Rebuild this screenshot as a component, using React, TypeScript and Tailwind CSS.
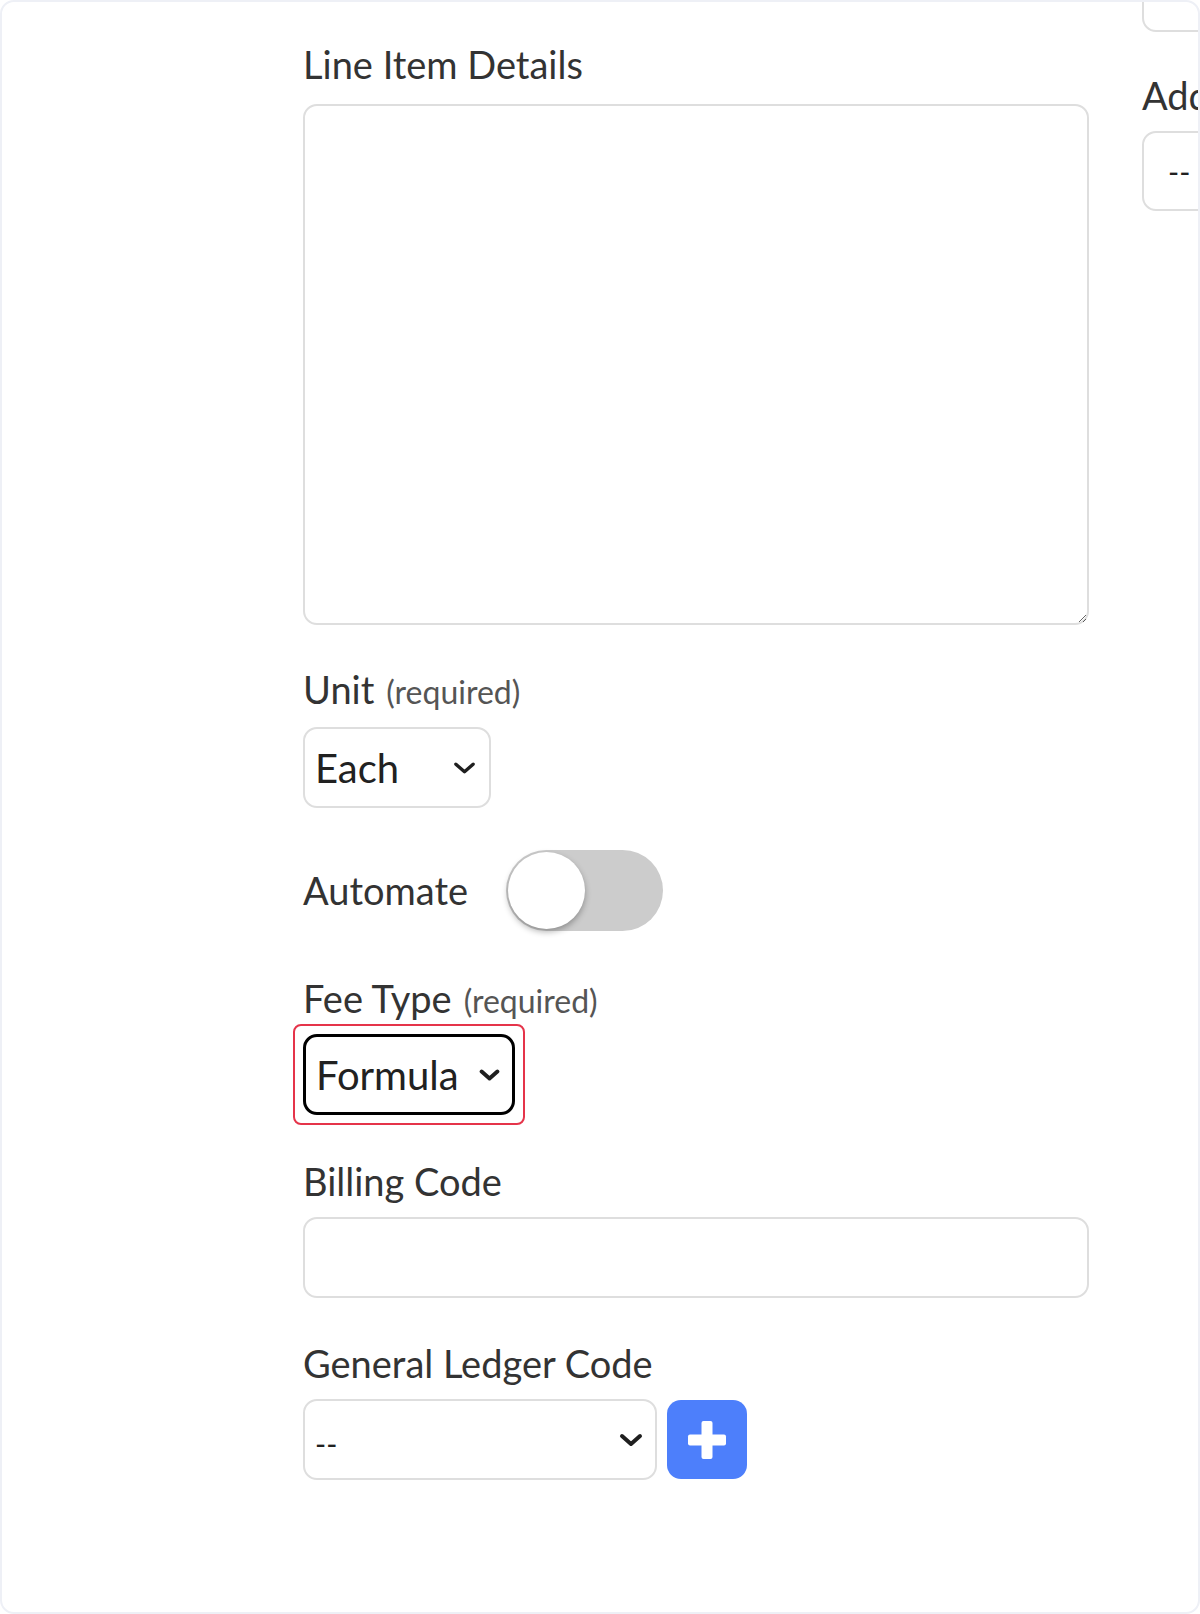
import { ReactNode } from "react";

function Chevron({ className, stroke = 3.5 }: { className?: string; stroke?: number }) {
  return (
    <svg viewBox="0 0 24 14" className={className} fill="none" stroke="#1f1f1f" strokeWidth={stroke} strokeLinecap="round" strokeLinejoin="round">
      <polyline points="3,3 12,11 21,3" />
    </svg>
  );
}

function Label({ children, className = "" }: { children: ReactNode; className?: string }) {
  return <div className={"text-[38px] leading-[43px] text-[#333] whitespace-nowrap " + className}>{children}</div>;
}

function Required() {
  return <span className="ml-[12px] text-[32px] text-[#555]">(required)</span>;
}

export default function App() {
  return (
    <div className="bg-white font-['Lato','Open_Sans',sans-serif]">
      <div className="w-full h-[1614px] border-2 border-[#eef0f6] rounded-[14px] overflow-hidden pl-[301px] pt-[41px] flex gap-[53px]">
        {/* main column */}
        <div className="w-[786px] shrink-0 flex flex-col items-start">
          <Label>Line Item Details</Label>
          <textarea className="mt-[18px] w-[786px] h-[521px] border-2 border-[#dedede] rounded-[14px] outline-none resize" />

          <Label className="mt-[43px]">
            Unit<Required />
          </Label>
          <div className="mt-[14px] w-[188px] h-[81px] border-2 border-[#dedede] rounded-[14px] flex items-center justify-between pl-[10px] pr-[13px]">
            <span className="text-[40px] text-[#212121]">Each</span>
            <Chevron className="w-[23px] h-[14px]" />
          </div>

          <div className="mt-[42px] flex items-center gap-[38px]">
            <Label>Automate</Label>
            <div className="w-[157px] h-[81px] rounded-full bg-[#cccccc] p-[2px] flex items-center">
              <div className="w-[77px] h-[77px] rounded-full bg-white shadow-[0_3px_6px_rgba(0,0,0,0.3)]" />
            </div>
          </div>

          <Label className="mt-[46px]">
            Fee Type<Required />
          </Label>
          <div className="mt-[2px] -ml-[10px] border-2 border-[#e5344a] rounded-[8px] p-[8px]">
            <div className="w-[212px] h-[81px] border-[3px] border-black rounded-[14px] flex items-center justify-between pl-[10px] pr-[12px]">
              <span className="text-[40px] text-[#212121]">Formula</span>
              <Chevron className="w-[21px] h-[14px]" stroke={4.5} />
            </div>
          </div>

          <Label className="mt-[35px]">Billing Code</Label>
          <input className="mt-[14px] w-[786px] h-[81px] border-2 border-[#dedede] rounded-[14px] outline-none" />

          <Label className="mt-[44px]">General Ledger Code</Label>
          <div className="mt-[14px] flex items-center gap-[10px]">
            <div className="w-[354px] h-[81px] border-2 border-[#dedede] rounded-[14px] flex items-center justify-between pl-[10px] pr-[12px]">
              <span className="text-[30px] text-[#212121] mt-[8px]">--</span>
              <Chevron className="w-[24px] h-[14px]" stroke={4} />
            </div>
            <button className="w-[80px] h-[79px] rounded-[14px] bg-[#4d7ffb] flex items-center justify-center">
              <svg viewBox="0 0 40 40" className="w-[40px] h-[40px]" fill="white">
                <rect x="14.5" y="1" width="11" height="38" rx="2" />
                <rect x="1" y="14.5" width="38" height="11" rx="2" />
              </svg>
            </button>
          </div>
        </div>

        {/* side column, mostly off screen */}
        <div className="w-[320px] shrink-0 -mt-[91px] flex flex-col items-start">
          <div className="w-[320px] h-[80px] border-2 border-[#dedede] rounded-[14px]" />
          <Label className="mt-[42px]">Additional Fees</Label>
          <div className="mt-[14px] w-[320px] h-[80px] border-2 border-[#dedede] rounded-[14px] flex items-center pl-[24px]">
            <span className="text-[30px] text-[#212121]">--</span>
          </div>
        </div>
      </div>
    </div>
  );
}
